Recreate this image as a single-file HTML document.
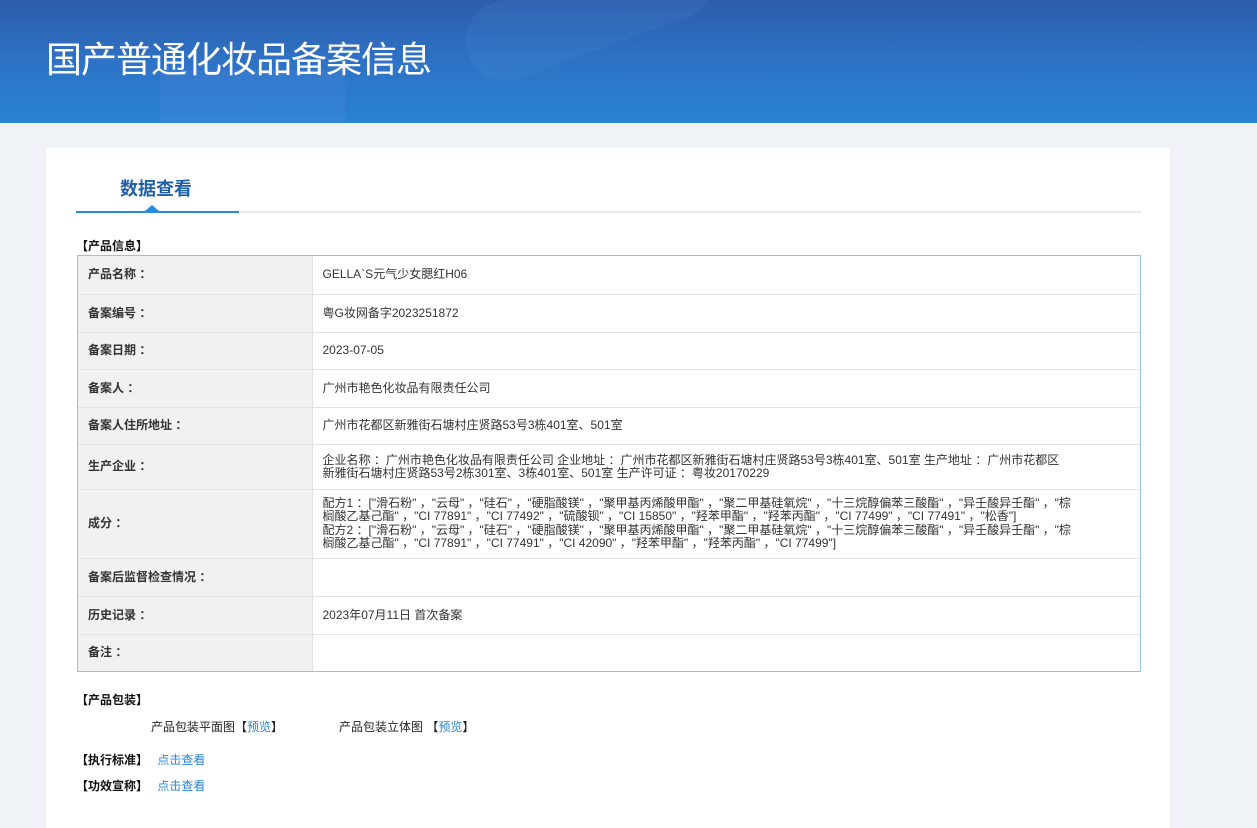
<!DOCTYPE html>
<html><head><meta charset="utf-8"><style>
*{margin:0;padding:0;box-sizing:border-box}
body{width:1257px;height:818px;overflow:hidden;background:#eff2f6;font-family:"Liberation Sans","Noto Sans CJK SC",sans-serif;font-size:12px;color:#333}
.hd{position:absolute;left:0;top:0;width:1257px;height:123px;background:linear-gradient(180deg,#2c5ca9 0%,#2e72c6 50%,#2883d2 100%);overflow:hidden}
.hd h1{position:absolute;left:46px;top:31px;font-size:36px;font-weight:normal;color:#fff;letter-spacing:-1px}
.panel{position:absolute;left:46px;top:148px;width:1124px;height:680px;background:#fff}
.tab{position:absolute;left:74px;top:27px;font-size:18px;font-weight:bold;color:#1f5fa6}
.line{position:absolute;left:30px;top:63px;width:1065px;height:2px;background:#e6e8ec}
.line2{position:absolute;left:30px;top:63px;width:163px;height:2px;background:#2a89dc}
.tri{position:absolute;left:99px;top:57px;width:0;height:0;border-left:7px solid transparent;border-right:7px solid transparent;border-bottom:6px solid #2a89dc}
.sec{position:absolute;left:30px;font-weight:bold;color:#111;font-size:12px}
.tw{position:absolute;left:31px;top:107px;width:1064px;border:1px solid #9dbcea}
table{width:100%;border-collapse:collapse}
td{border:1px solid #e2e2e2;padding:0 10px;vertical-align:middle;line-height:13px}
tr:first-child td{border-top:none}tr:last-child td{border-bottom:none}
td:first-child{border-left:none}td:last-child{border-right:none}
td.l{width:234px;background:#f1f1f1;font-weight:bold;color:#333}
a{color:#2a85d6;text-decoration:none}
.r{position:absolute;font-size:12px;color:#222}
</style></head><body>
<div class="hd"><div style="position:absolute;left:160px;top:70px;width:185px;height:60px;background:rgba(90,140,230,.2)"></div><div style="position:absolute;left:460px;top:-30px;width:260px;height:80px;border-radius:40px;background:rgba(90,160,230,.12);transform:rotate(-20deg)"></div><h1>国产普通化妆品备案信息</h1></div>
<div class="panel">
<div class="tab">数据查看</div>
<div class="line"></div><div class="line2"></div><div class="tri"></div>
<div class="sec" style="top:89px">【产品信息】</div>
<div class="tw"><table>
<tr style="height:38px"><td class="l">产品名称 ：</td><td>GELLA`S元气少女腮红H06</td></tr>
<tr style="height:38px"><td class="l">备案编号 ：</td><td>粤G妆网备字2023251872</td></tr>
<tr style="height:37px"><td class="l">备案日期 ：</td><td>2023-07-05</td></tr>
<tr style="height:38px"><td class="l">备案人 ：</td><td>广州市艳色化妆品有限责任公司</td></tr>
<tr style="height:37px"><td class="l">备案人住所地址 ：</td><td>广州市花都区新雅街石塘村庄贤路53号3栋401室、501室</td></tr>
<tr style="height:45px"><td class="l">生产企业 ：</td><td>企业名称 ：广州市艳色化妆品有限责任公司 企业地址 ：广州市花都区新雅街石塘村庄贤路53号3栋401室、501室 生产地址 ：广州市花都区<br>新雅街石塘村庄贤路53号2栋301室、3栋401室、501室 生产许可证 ：粤妆20170229</td></tr>
<tr style="height:69px"><td class="l">成分 ：</td><td style="line-height:13.5px">配方1 ：["滑石粉" ，"云母" ，"硅石" ，"硬脂酸镁" ，"聚甲基丙烯酸甲酯" ，"聚二甲基硅氧烷" ，"十三烷醇偏苯三酸酯" ，"异壬酸异壬酯" ，"棕<br>榈酸乙基己酯" ，"CI 77891" ，"CI 77492" ，"硫酸钡" ，"CI 15850" ，"羟苯甲酯" ，"羟苯丙酯" ，"CI 77499" ，"CI 77491" ，"松香"]<br>配方2 ：["滑石粉" ，"云母" ，"硅石" ，"硬脂酸镁" ，"聚甲基丙烯酸甲酯" ，"聚二甲基硅氧烷" ，"十三烷醇偏苯三酸酯" ，"异壬酸异壬酯" ，"棕<br>榈酸乙基己酯" ，"CI 77891" ，"CI 77491" ，"CI 42090" ，"羟苯甲酯" ，"羟苯丙酯" ，"CI 77499"]</td></tr>
<tr style="height:38px"><td class="l">备案后监督检查情况 ：</td><td></td></tr>
<tr style="height:38px"><td class="l">历史记录 ：</td><td>2023年07月11日 首次备案</td></tr>
<tr style="height:37px"><td class="l">备注 ：</td><td></td></tr>
</table></div>
<div class="sec" style="top:543px">【产品包装】</div>
<div class="r" style="left:105px;top:570px">产品包装平面图【<a>预览</a>】</div>
<div class="r" style="left:293px;top:570px">产品包装立体图 【<a>预览</a>】</div>
<div class="sec" style="top:603px">【执行标准】 <a style="font-weight:normal;margin-left:6px">点击查看</a></div>
<div class="sec" style="top:629px">【功效宣称】 <a style="font-weight:normal;margin-left:6px">点击查看</a></div>
</div>
</body></html>
